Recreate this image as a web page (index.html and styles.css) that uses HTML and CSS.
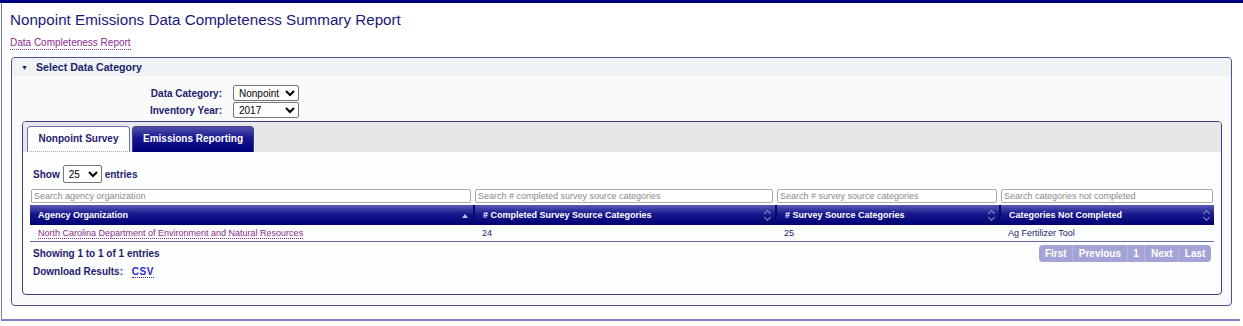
FILE: index.html
```html
<!DOCTYPE html>
<html lang="en">

<head>
    <meta charset="UTF-8">
    <title>Nonpoint Emissions Data Completeness Summary Report</title>
    <link rel="stylesheet" href="styles.css">
</head>

<body>
    <div class="topbar"></div>
    <div class="page">
        <h1>Nonpoint Emissions Data Completeness Summary Report</h1>
        <a class="crumb" href="#">Data Completeness Report</a>

        <div class="panel">
            <div class="panel-head"><span class="caret">&#9660;</span>Select Data Category</div>
            <div class="panel-body">
                <div class="filters">
                    <label for="cat">Data Category:</label>
                    <select id="cat">
                        <option>Nonpoint</option>
                    </select>
                    <label for="year">Inventory Year:</label>
                    <select id="year">
                        <option>2017</option>
                    </select>
                </div>

                <div class="tabs">
                    <div class="tab-bar">
                        <span class="tab active">Nonpoint Survey</span>
                        <span class="tab">Emissions Reporting</span>
                    </div>
                    <div class="tab-body">
                        <div class="length">
                            Show
                            <select>
                                <option>25</option>
                            </select>
                            entries
                        </div>

                        <table class="grid">
                            <colgroup>
                                <col class="c1">
                                <col class="c2">
                                <col class="c3">
                                <col class="c4">
                            </colgroup>
                            <thead>
                                <tr class="search-row">
                                    <td><input type="text" placeholder="Search agency organization"></td>
                                    <td><input type="text" placeholder="Search # completed survey source categories"></td>
                                    <td><input type="text" placeholder="Search # survey source categories"></td>
                                    <td><input type="text" placeholder="Search categories not completed"></td>
                                </tr>
                                <tr class="head-row">
                                    <th>Agency Organization <span class="sort asc"></span></th>
                                    <th># Completed Survey Source Categories <span class="sort both"></span></th>
                                    <th># Survey Source Categories <span class="sort both"></span></th>
                                    <th>Categories Not Completed <span class="sort both"></span></th>
                                </tr>
                            </thead>
                            <tbody>
                                <tr>
                                    <td><a class="org" href="#">North Carolina Department of Environment and Natural Resources</a></td>
                                    <td>24</td>
                                    <td>25</td>
                                    <td>Ag Fertilizer Tool</td>
                                </tr>
                            </tbody>
                        </table>

                        <div class="table-foot">
                            <div class="info">Showing 1 to 1 of 1 entries</div>
                            <div class="pager">
                                <span>First</span><span>Previous</span><span>1</span><span>Next</span><span>Last</span>
                            </div>
                        </div>
                        <div class="download">Download Results: <a href="#">CSV</a></div>
                    </div>
                </div>
            </div>
        </div>
    </div>
</body>

</html>
```

FILE: styles.css
```css
* {
    box-sizing: border-box;
    margin: 0;
    padding: 0;
}

body {
    font-family: "Liberation Sans", Arial, sans-serif;
    font-size: 10px;
    color: #1c1c6e;
    background: #ffffff;
}

.topbar {
    height: 3px;
    background: #000080;
}

.page {
    width: 1239px;
    margin-left: 1px;
    height: 318px;
    border-left: 1px solid #7a7ab8;
    border-bottom: 2px solid #8484c4;
    padding: 7px 0 0 8px;
}

h1 {
    font-size: 15.2px;
    font-weight: normal;
    line-height: 20px;
    color: #1a1a7a;
}

.crumb {
    display: inline-block;
    margin-top: 7px;
    color: #8e2b8e;
    text-decoration: none;
    border-bottom: 1px dotted #8e2b8e;
    line-height: 12px;
}

.panel {
    width: 1221px;
    margin: 7px 0 0 1px;
    border: 1px solid #4d4d92;
    border-radius: 4px;
    background: #f9fbfb;
}

.panel-head {
    height: 18px;
    line-height: 18px;
    padding-left: 9px;
    background: #f0f3f5;
    border-radius: 4px 4px 0 0;
    font-size: 10.6px;
    font-weight: bold;
    color: #1c1c6e;
}

.caret {
    font-size: 7px;
    display: inline-block;
    width: 15px;
    vertical-align: 1px;
}

.panel-body {
    padding: 9px 9px 10px 10px;
}

.filters {
    display: grid;
    grid-template-columns: 190px 66px;
    column-gap: 11px;
    row-gap: 1px;
    align-items: center;
    margin-left: 10px;
}

.filters label {
    text-align: right;
    font-weight: bold;
}

select {
    font-family: "Liberation Sans", Arial, sans-serif;
    font-size: 10px;
    height: 16px;
    border: 1px solid #767676;
    border-radius: 2px;
    background: #ffffff;
    color: #000000;
    padding-left: 1px;
}

.filters select {
    width: 66px;
}

.tabs {
    margin-top: 3px;
    border: 1px solid #3e3e86;
    border-radius: 4px;
    background: #fcfdfd;
}

.tab-bar {
    display: flex;
    gap: 2px;
    height: 30px;
    padding: 4px 0 0 4px;
    background: #e7e7e7;
    border-radius: 3px 3px 0 0;
}

.tab {
    height: 26px;
    line-height: 24px;
    padding: 0 10px;
    border: 1px solid #3e3e86;
    border-bottom: none;
    border-radius: 4px 4px 0 0;
    font-weight: bold;
    white-space: nowrap;
    color: #ffffff;
    background: linear-gradient(#5050aa, #15158e 45%, #00007a);
}

.tab.active {
    width: 103px;
    text-align: center;
    color: #1c1c6e;
    background: #ffffff;
    border-color: #7070b0;
    border-bottom: 1px dotted #b0b0d0;
}

.tab-body {
    padding: 13px 6px 17px 7px;
}

.length {
    display: flex;
    align-items: center;
    gap: 3px;
    font-weight: bold;
    margin-left: 3px;
}

.length select {
    width: 39px;
    height: 18px;
}

.grid {
    width: 1184px;
    margin-top: 6px;
    border-collapse: collapse;
    table-layout: fixed;
    font-size: 9px;
}

.c1 { width: 444px; }
.c2 { width: 302px; }
.c3 { width: 224px; }
.c4 { width: 214px; }

.search-row td {
    padding: 0 3px 2px 1px;
}

.search-row td:last-child {
    padding-right: 1px;
}

input {
    display: block;
    width: 100%;
    height: 14px;
    border: 1px solid #a9a9a9;
    border-radius: 2px;
    padding: 0 2px;
    font-family: "Liberation Sans", Arial, sans-serif;
    font-size: 9px;
}

input::placeholder {
    color: #8a8a8a;
}

.head-row th {
    position: relative;
    height: 20px;
    text-align: left;
    padding-left: 8px;
    color: #ffffff;
    font-weight: bold;
    background: linear-gradient(#5a5ab8, #18188e 45%, #000074);
    border-left: 2px solid #0a0a5c;
}

.head-row th:first-child {
    border-left: none;
}

.sort {
    position: absolute;
    right: 4px;
    top: 5px;
    width: 7px;
    height: 11px;
}

.sort.asc::before {
    content: "";
    position: absolute;
    left: 0;
    top: 4px;
    border-left: 3px solid transparent;
    border-right: 3px solid transparent;
    border-bottom: 4px solid #c6c6e6;
}

.sort.both::before,
.sort.both::after {
    content: "";
    position: absolute;
    left: 1px;
    width: 4px;
    height: 4px;
    border-left: 1px solid #8c8cb8;
    border-top: 1px solid #8c8cb8;
}

.sort.both::before {
    top: 1px;
    transform: rotate(45deg);
}

.sort.both::after {
    top: 5px;
    transform: rotate(225deg);
}

tbody td {
    height: 16px;
    padding-left: 8px;
    padding-top: 1px;
    border-bottom: 1px solid #6a6aae;
    color: #1c1c6e;
}

.org {
    color: #8e2b8e;
    text-decoration: none;
    border-bottom: 1px dotted #8e2b8e;
}

.table-foot {
    display: flex;
    justify-content: space-between;
    align-items: flex-start;
    margin-top: 3px;
    padding-right: 4px;
}

.info {
    font-weight: bold;
    margin-left: 3px;
    padding-top: 3px;
}

.pager {
    display: flex;
    background: #a3a3d6;
    border-radius: 4px;
    height: 17px;
    line-height: 17px;
    font-weight: bold;
    color: #ffffff;
}

.pager span {
    padding: 0 5.6px;
    border-left: 1px solid #b4b4de;
}

.pager span:first-child {
    border-left: none;
}

.download {
    margin: 4px 0 0 3px;
    font-weight: bold;
}

.download a {
    margin-left: 6px;
    color: #2a2ad0;
    text-decoration: none;
    border-bottom: 1px dotted #2a2ad0;
    letter-spacing: 0.5px;
}
```
